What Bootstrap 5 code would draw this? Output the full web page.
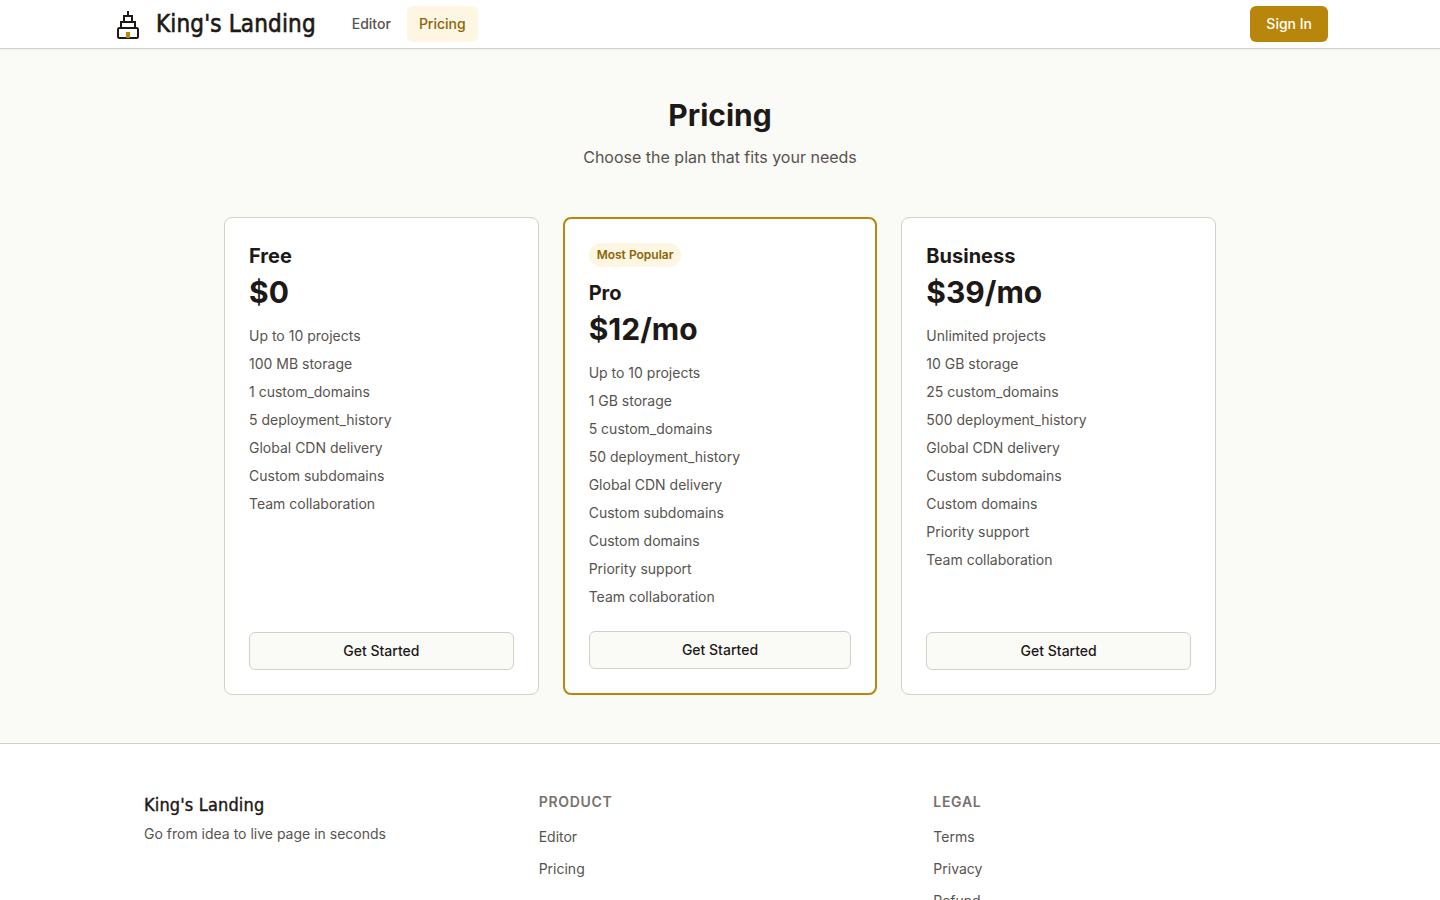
<!DOCTYPE html>
<html lang="en">

<head>
  <meta charset="UTF-8">
  <meta name="viewport" content="width=device-width, initial-scale=1">
  <title>Pricing - King's Landing</title>
  <link href="https://cdn.jsdelivr.net/npm/bootstrap@5.3.3/dist/css/bootstrap.min.css" rel="stylesheet">
  <style>
    body {
      font-family: Inter, "Liberation Sans", sans-serif;
      background-color: #fafaf7;
      color: #1c1917;
    }

    .topbar {
      height: 49px;
      background-color: #fff;
      border-bottom: 1px solid #d6d0c4;
      box-shadow: 0 1px 2px rgba(0, 0, 0, .05);
    }

    .topbar-inner {
      max-width: 1280px;
      height: 48px;
      padding: 0 32px;
    }

    .brand-icon {
      margin-top: 2px;
    }

    .brand-name {
      font-family: "DejaVu Sans Condensed", "DejaVu Sans", sans-serif;
      font-size: 24px;
      font-weight: 400;
      line-height: 1;
      letter-spacing: 0.15px;
      color: #1c1917;
      -webkit-text-stroke: 0.6px #1c1917;
    }

    .brand-link {
      gap: 16px;
      margin-left: 4px;
      margin-right: 24px;
      text-decoration: none;
    }

    .menu-links {
      gap: 4px;
    }

    .menu-link {
      font-size: 14px;
      font-weight: 500;
      line-height: 20px;
      padding: 8px 12px;
      border-radius: 6px;
      color: #57534e;
      text-decoration: none;
    }

    .menu-link.active {
      background-color: #fdf6e3;
      color: #8b6508;
    }

    .signin-btn {
      font-size: 14px;
      font-weight: 500;
      line-height: 20px;
      padding: 8px 16px;
      border: 0;
      border-radius: 6px;
      background-color: #b8860b;
      color: #fff;
    }

    .page-main {
      padding: 48px 0;
    }

    .page-title {
      font-size: 30px;
      font-weight: 700;
      line-height: 36px;
      margin: 0 0 12px;
    }

    .page-sub {
      font-size: 16px;
      line-height: 24px;
      color: #57534e;
      margin: 0 0 48px;
    }

    .plans {
      display: grid;
      grid-template-columns: repeat(3, 1fr);
      gap: 24px;
      max-width: 992px;
      margin: 0 auto;
    }

    .plan {
      background-color: #fff;
      border: 1px solid #d6d0c4;
      border-radius: 8px;
      padding: 24px;
    }

    .plan.featured {
      border: 2px solid #b8860b;
    }

    .popular-tag {
      font-size: 12px;
      font-weight: 600;
      line-height: 16px;
      padding: 4px 8px;
      border-radius: 999px;
      background-color: #fdf6e3;
      color: #8b6508;
      margin-bottom: 12px;
    }

    .plan-name {
      font-size: 20px;
      font-weight: 700;
      line-height: 28px;
      margin: 0 0 4px;
    }

    .plan-price {
      font-size: 30px;
      font-weight: 700;
      line-height: 36px;
      margin-bottom: 16px;
    }

    .plan-features {
      list-style: none;
      padding: 0;
      margin: 0 0 24px;
      display: flex;
      flex-direction: column;
      gap: 8px;
      font-size: 14px;
      line-height: 20px;
      color: #57534e;
    }

    .plan-btn {
      font-size: 14px;
      font-weight: 500;
      line-height: 20px;
      padding: 8px 16px;
      border: 1px solid #d6d0c4;
      border-radius: 6px;
      background-color: #fafaf7;
      color: #1c1917;
      width: 100%;
      margin-top: auto;
    }

    .site-foot {
      background-color: #fff;
      border-top: 1px solid #d6d0c4;
      padding: 48px 0;
    }

    .foot-grid {
      display: grid;
      grid-template-columns: repeat(3, 1fr);
      gap: 32px;
      max-width: 1152px;
      margin: 0 auto;
    }

    .foot-brand {
      font-family: "DejaVu Sans Condensed", "DejaVu Sans", sans-serif;
      font-size: 18px;
      line-height: 24px;
      letter-spacing: 0.15px;
      -webkit-text-stroke: 0.4px #1c1917;
      margin-top: 1px;
      margin-bottom: 7px;
    }

    .foot-text {
      font-size: 14px;
      line-height: 20px;
      color: #57534e;
    }

    .foot-head {
      font-size: 14px;
      font-weight: 600;
      line-height: 20px;
      letter-spacing: 0.7px;
      text-transform: uppercase;
      color: #78716c;
      margin-bottom: 15px;
    }

    .foot-links {
      list-style: none;
      padding: 0;
      margin: 0;
      display: flex;
      flex-direction: column;
      gap: 12px;
      font-size: 14px;
      line-height: 20px;
    }

    .foot-links a {
      color: #57534e;
      text-decoration: none;
    }
  </style>
</head>

<body>

  <nav class="topbar">
    <div class="topbar-inner mx-auto d-flex align-items-center">
      <a href="#" class="brand-link d-flex align-items-center">
        <svg class="brand-icon" width="24" height="28" viewBox="0 0 24 28" fill="none" stroke="#1c1917" stroke-width="2">
          <path d="M12 0v5" />
          <path d="M8 11V5h8v6" />
          <path d="M5 17v-6h14v6" />
          <rect x="2" y="17" width="20" height="10" rx="1.500" />
          <rect x="10" y="21" width="4" height="6" fill="#b8860b" stroke="none" />
        </svg>
        <span class="brand-name">King's Landing</span>
      </a>
      <div class="menu-links d-flex">
        <a href="#" class="menu-link">Editor</a>
        <a href="#" class="menu-link active">Pricing</a>
      </div>
      <button class="signin-btn ms-auto">Sign In</button>
    </div>
  </nav>

  <main class="page-main">
    <div class="text-center">
      <h1 class="page-title">Pricing</h1>
      <p class="page-sub">Choose the plan that fits your needs</p>
    </div>

    <div class="plans">
      <div class="plan d-flex flex-column">
        <h2 class="plan-name">Free</h2>
        <div class="plan-price">$0</div>
        <ul class="plan-features">
          <li>Up to 10 projects</li>
          <li>100 MB storage</li>
          <li>1 custom_domains</li>
          <li>5 deployment_history</li>
          <li>Global CDN delivery</li>
          <li>Custom subdomains</li>
          <li>Team collaboration</li>
        </ul>
        <button class="plan-btn">Get Started</button>
      </div>

      <div class="plan featured d-flex flex-column">
        <div class="d-flex"><span class="popular-tag">Most Popular</span></div>
        <h2 class="plan-name">Pro</h2>
        <div class="plan-price">$12/mo</div>
        <ul class="plan-features">
          <li>Up to 10 projects</li>
          <li>1 GB storage</li>
          <li>5 custom_domains</li>
          <li>50 deployment_history</li>
          <li>Global CDN delivery</li>
          <li>Custom subdomains</li>
          <li>Custom domains</li>
          <li>Priority support</li>
          <li>Team collaboration</li>
        </ul>
        <button class="plan-btn">Get Started</button>
      </div>

      <div class="plan d-flex flex-column">
        <h2 class="plan-name">Business</h2>
        <div class="plan-price">$39/mo</div>
        <ul class="plan-features">
          <li>Unlimited projects</li>
          <li>10 GB storage</li>
          <li>25 custom_domains</li>
          <li>500 deployment_history</li>
          <li>Global CDN delivery</li>
          <li>Custom subdomains</li>
          <li>Custom domains</li>
          <li>Priority support</li>
          <li>Team collaboration</li>
        </ul>
        <button class="plan-btn">Get Started</button>
      </div>
    </div>
  </main>

  <footer class="site-foot">
    <div class="foot-grid">
      <div>
        <div class="foot-brand">King's Landing</div>
        <div class="foot-text">Go from idea to live page in seconds</div>
      </div>
      <div>
        <div class="foot-head">Product</div>
        <ul class="foot-links">
          <li><a href="#">Editor</a></li>
          <li><a href="#">Pricing</a></li>
        </ul>
      </div>
      <div>
        <div class="foot-head">Legal</div>
        <ul class="foot-links">
          <li><a href="#">Terms</a></li>
          <li><a href="#">Privacy</a></li>
          <li><a href="#">Refund</a></li>
        </ul>
      </div>
    </div>
  </footer>

  <script src="https://cdn.jsdelivr.net/npm/bootstrap@5.3.3/dist/js/bootstrap.bundle.min.js"></script>
</body>

</html>
